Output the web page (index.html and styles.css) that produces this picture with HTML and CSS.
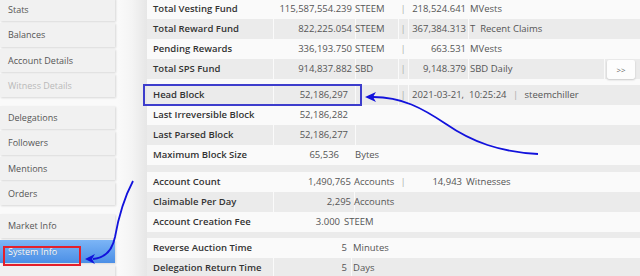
FILE: index.html
```html
<!DOCTYPE html>
<html lang="en">
<head>
    <meta charset="UTF-8">
    <meta name="viewport" content="width=device-width, initial-scale=1.0">
    <title>System Info</title>
    <link rel="stylesheet" href="styles.css">
</head>
<body>
    <div class="page">
        <nav class="side">
            <div class="btn">Stats</div>
            <div class="btn">Balances</div>
            <div class="btn">Account Details</div>
            <div class="btn off">Witness Details</div>
            <div class="btn gap">Delegations</div>
            <div class="btn">Followers</div>
            <div class="btn">Mentions</div>
            <div class="btn">Orders</div>
            <div class="btn gap">Market Info</div>
            <div class="btn active">System Info</div>
            <div class="btn"></div>
        </nav>

        <main class="info">
            <div class="s1">
                <div class="row"><span class="lbl">Total Vesting Fund</span><span class="val">115,587,554.239</span><span class="unit">STEEM</span><span class="bar">|</span><span class="val2">218,524.641</span><span class="unit2">MVests</span></div>
                <div class="row alt"><span class="lbl">Total Reward Fund</span><span class="val">822,225.054</span><span class="unit">STEEM</span><span class="bar">|</span><span class="val2">367,384.313</span><span class="unit2">T&nbsp;&nbsp;Recent Claims</span></div>
                <div class="row"><span class="lbl">Pending Rewards</span><span class="val">336,193.750</span><span class="unit">STEEM</span><span class="bar">|</span><span class="val2">663.531</span><span class="unit2">MVests</span></div>
                <div class="row alt"><span class="lbl">Total SPS Fund</span><span class="val">914,837.882</span><span class="unit">SBD</span><span class="bar">|</span><span class="val2">9,148.379</span><span class="unit2">SBD Daily</span><span class="more"><button>&gt;&gt;</button></span></div>
            </div>
            <div class="sep"></div>
            <div class="s2">
                <div class="row alt"><span class="lbl">Head Block</span><span class="val">52,186,297</span><span class="unit"></span><span class="bar">|</span><span class="stamp"><span>2021-03-21,&nbsp; 10:25:24</span><span class="bar">|</span><span>steemchiller</span></span></div>
                <div class="row"><span class="lbl">Last Irreversible Block</span><span class="val">52,186,282</span><span class="unit"></span></div>
                <div class="row alt"><span class="lbl">Last Parsed Block</span><span class="val">52,186,277</span><span class="unit"></span></div>
                <div class="row"><span class="lbl">Maximum Block Size</span><span class="val short">65,536</span><span class="unit">Bytes</span></div>
            </div>
            <div class="sep alt wide"></div>
            <div class="s3">
                <div class="row"><span class="lbl">Account Count</span><span class="val">1,490,765</span><span class="unit">Accounts</span><span class="bar">|</span><span class="val2">14,943</span><span class="unit2">Witnesses</span></div>
                <div class="row alt"><span class="lbl">Claimable Per Day</span><span class="val">2,295</span><span class="unit">Accounts</span></div>
                <div class="row fee"><span class="lbl">Account Creation Fee</span><span class="val">3.000</span><span class="unit">STEEM</span></div>
            </div>
            <div class="sep alt"></div>
            <div class="s4">
                <div class="row"><span class="lbl">Reverse Auction Time</span><span class="val">5</span><span class="unit">Minutes</span></div>
                <div class="row alt"><span class="lbl">Delegation Return Time</span><span class="val">5</span><span class="unit">Days</span></div>
            </div>
        </main>
    </div>

    <div class="mark head-mark"></div>
    <div class="mark sys-mark"></div>

    <svg class="arrows" width="640" height="276" viewBox="0 0 640 276">
        <path d="M538 154 C500 152 472 142 446 124 C422 108 402 97 373 97" />
        <polygon points="365,97 376,92 373,97 376,102" />
        <path d="M133 181 C123 200 118 220 115 237 C112 252 104 258 93 259" />
        <polygon points="85,259 95,254 92,259 95,264" />
    </svg>
</body>
</html>
```

FILE: styles.css
```css
* { box-sizing: border-box; }
body { margin: 0; background: #fafafa; font-family: "Open Sans", "Liberation Sans", sans-serif; font-size: 9px; color: #555; overflow: hidden; }
.page { display: flex; height: 276px; }

.side { width: 147px; flex: none; margin-top: -2px; background: linear-gradient(to right, #fafafa 118px, #f4f4f4 132px, #e6e6e6 147px); }
.btn { width: 115px; height: 23.3px; margin-bottom: 2px; padding-left: 8px; line-height: 23px; background: #f1f1f1; box-shadow: 1px 1px 2px rgba(0, 0, 0, 0.14); }
.btn.gap { margin-top: 9px; }
.btn.off { color: #b9b9b9; }
.btn.active { color: #fff; background: linear-gradient(#7cb5f6, #4b8fe6); text-shadow: 0 0 1px rgba(0, 0, 0, 0.25); }

.info { flex: 1; margin-top: -1px; font-size: 9.5px; }
.row { display: grid; height: 20px; line-height: 20px; white-space: nowrap; }
.row > span + span { box-shadow: inset 1px 0 #fafafa; }
.alt { background: #ebebeb; }
.sep { height: 6px; }
.sep.wide { height: 7px; }

.lbl { padding-left: 6px; color: #333; font-weight: 600; }
.val { text-align: right; padding-right: 3px; }
.val2 { text-align: right; padding-right: 2px; }
.unit2 { padding-left: 2px; }
.bar { text-align: center; color: #aaa; }

.s1 .row { grid-template-columns: 126px 82px 43px 10px 60px 1fr 36px; }
.s2 .row { grid-template-columns: 126px 82px 43px 10px 1fr; }
.s2 .val { padding-right: 7px; }
.s2 .val.short { padding-right: 16px; }
.stamp { display: flex; padding-left: 4px; }
.stamp .bar { width: 18px; }
.s3 .row { grid-template-columns: 126px 81px 44px 10px 54px 1fr; }
.s3 .val2 { padding-right: 0; }
.s3 .unit2 { padding-left: 4px; }
.s3 .row.fee { grid-template-columns: 126px 71px 1fr; }
.s3 .row.fee .val { padding-right: 4px; }
.s4 .row { grid-template-columns: 126px 78px 1fr; }
.s4 .val { padding-right: 4px; }
.s4 .unit { padding-left: 2px; }

.more { display: flex; align-items: center; }
.more button { width: 28px; height: 19px; margin-left: 3px; padding: 0; border: none; border-radius: 2px; background: #fdfdfd; box-shadow: 0 1px 2px rgba(0, 0, 0, 0.2); font-family: inherit; font-size: 8px; color: #666; }

.mark { position: absolute; border: 2px solid; }
.head-mark { left: 143px; top: 84px; width: 219px; height: 22px; border-color: #3d3dcc; }
.sys-mark { left: 3px; top: 246px; width: 78px; height: 20px; border-color: #e3202c; }

.arrows { position: absolute; left: 0; top: 0; pointer-events: none; }
.arrows path { fill: none; stroke: #1212dc; stroke-width: 1.8; }
.arrows polygon { fill: #1212dc; }
```
